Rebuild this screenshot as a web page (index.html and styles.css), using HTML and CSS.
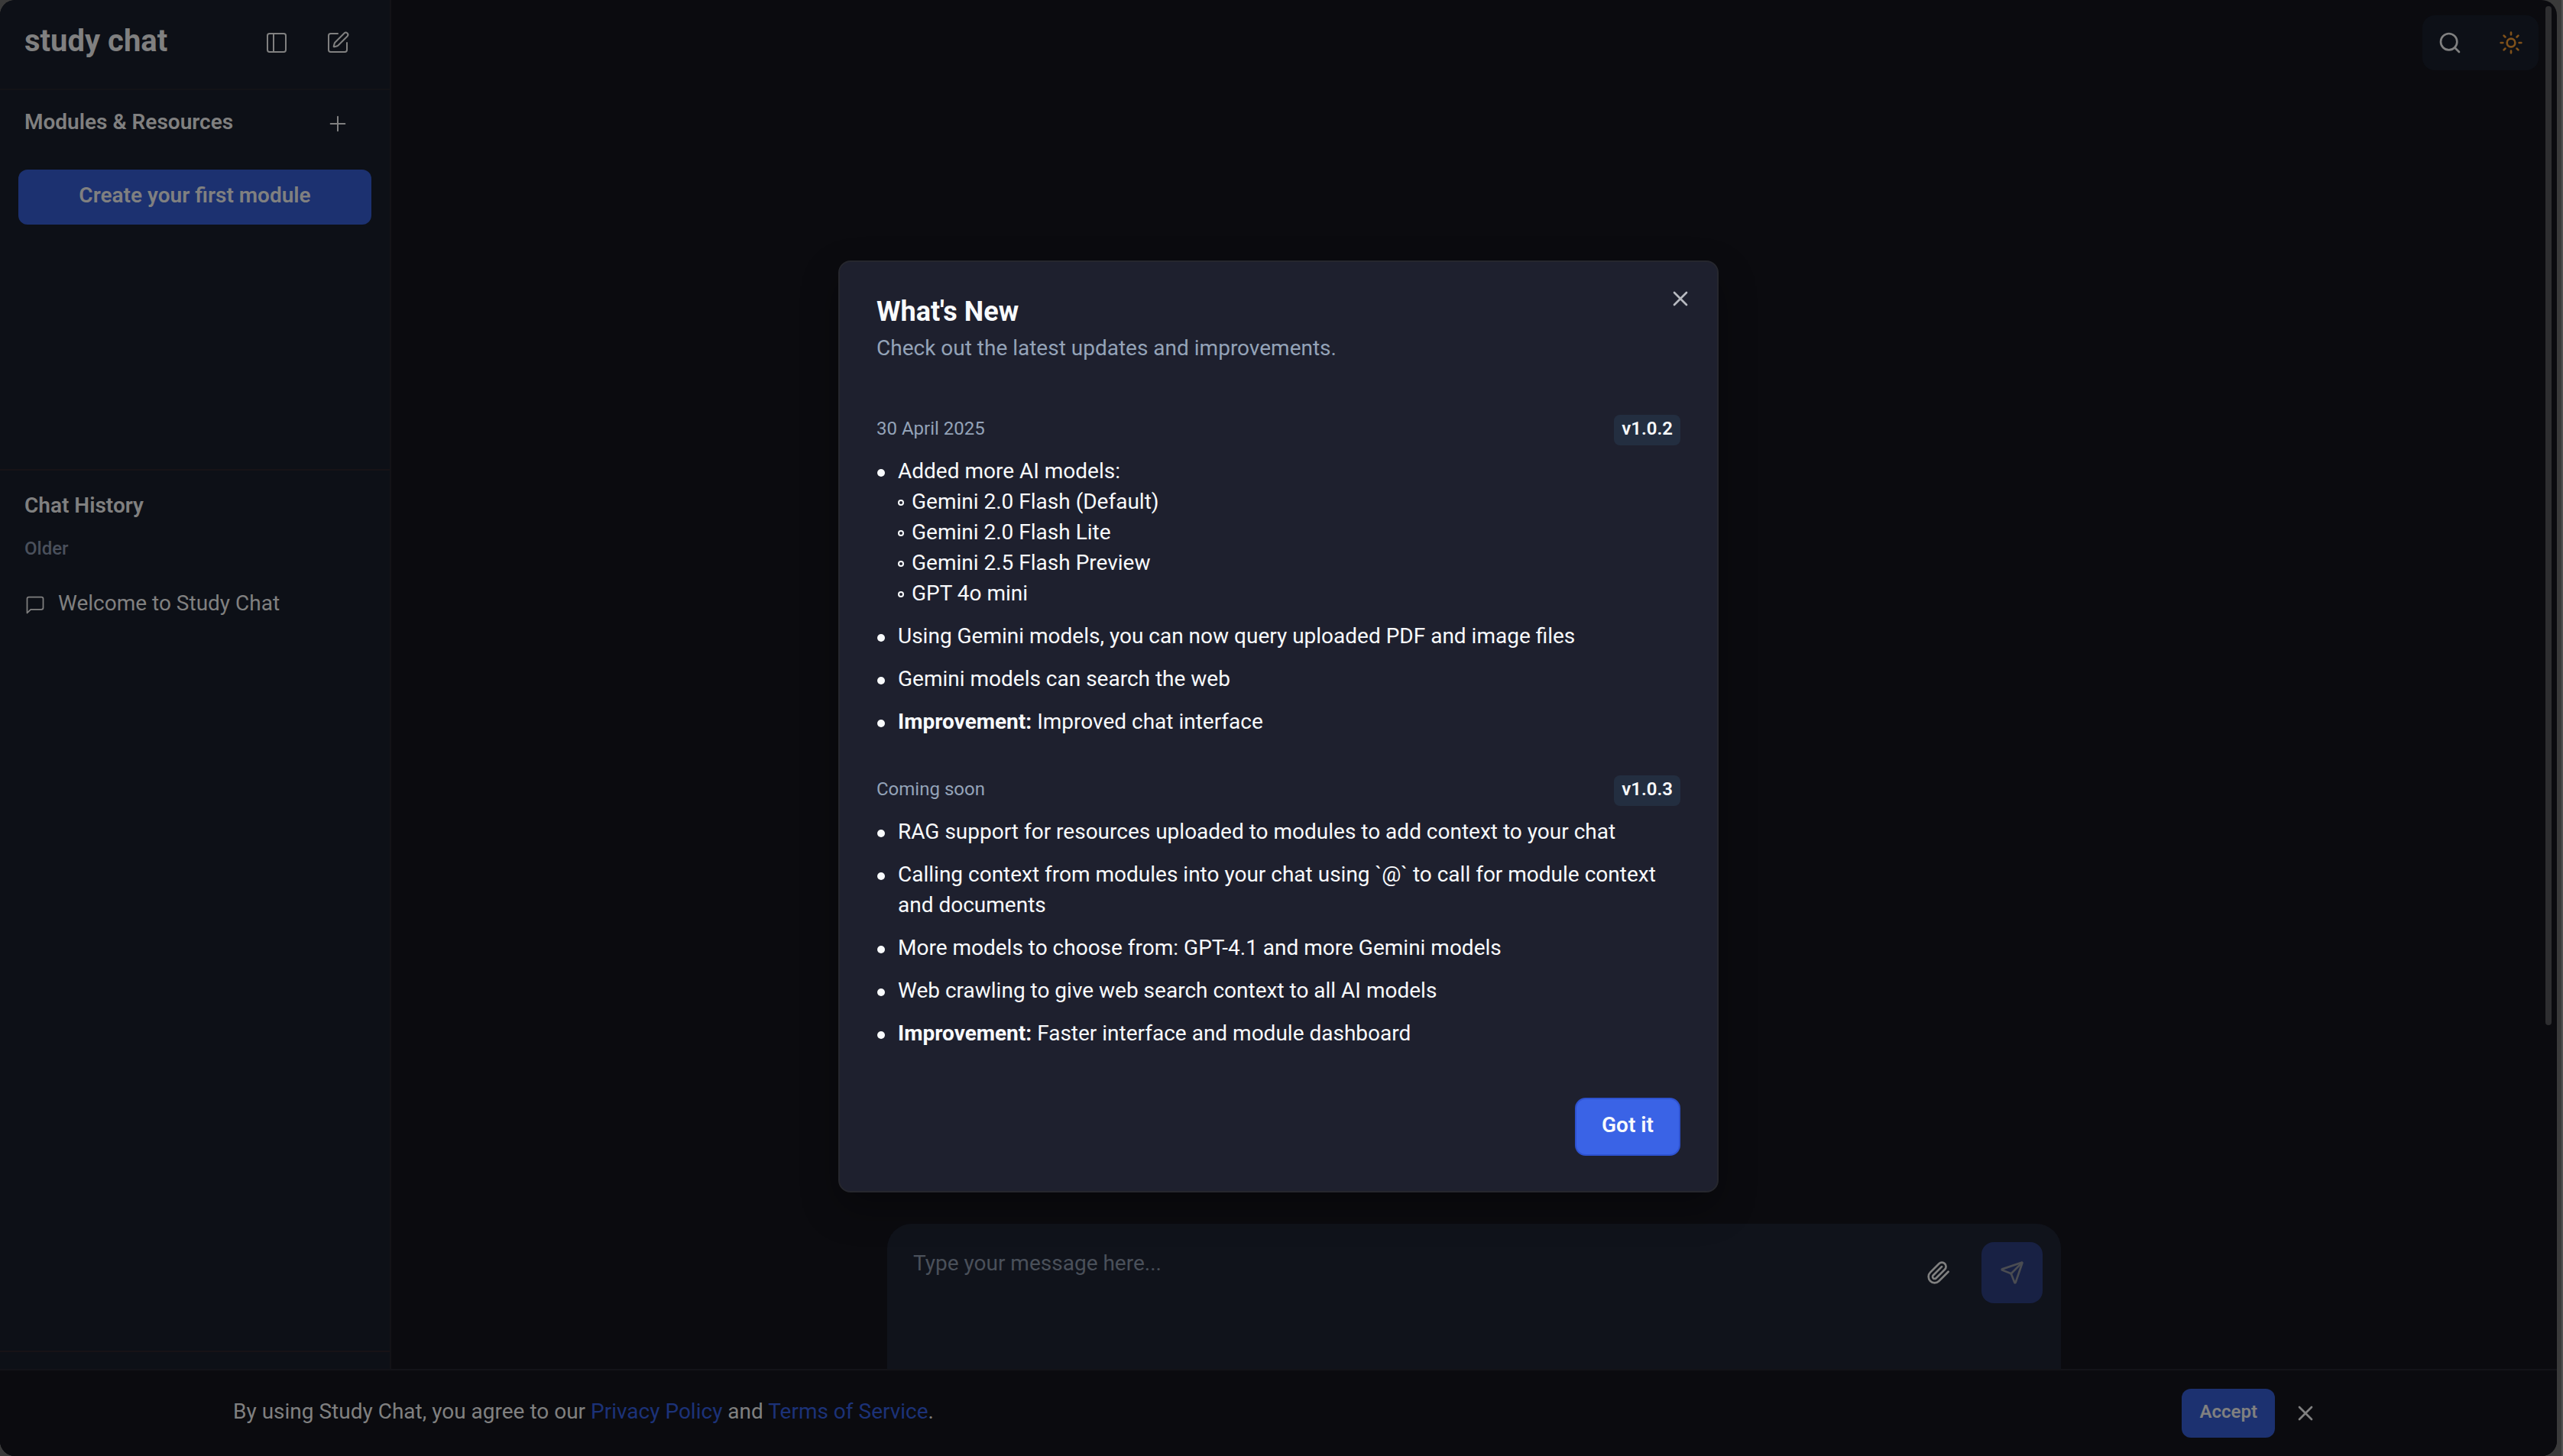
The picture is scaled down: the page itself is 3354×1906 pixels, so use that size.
FILE: index.html
```html
<!DOCTYPE html>
<html lang="en">
<head>
<meta charset="utf-8">
<meta name="viewport" content="width=device-width, initial-scale=1">
<title>study chat</title>
<link rel="stylesheet" href="styles.css">
</head>
<body>
<div class="window">
  <div class="shell">
    <aside class="sidebar">
      <header class="sidebar-header">
        <h1 class="brand">study chat</h1>
        <button class="icon-btn" type="button" aria-label="Toggle sidebar">
          <svg class="icon" viewBox="0 0 24 24"><rect x="3" y="3" width="18" height="18" rx="2"/><path d="M9 3v18"/></svg>
        </button>
        <button class="icon-btn" type="button" aria-label="New chat">
          <svg class="icon" viewBox="0 0 24 24"><path d="M12 3H5a2 2 0 0 0-2 2v14a2 2 0 0 0 2 2h14a2 2 0 0 0 2-2v-7"/><path d="M18.375 2.625a1 1 0 0 1 3 3l-9.013 9.014a2 2 0 0 1-.853.505l-2.873.84a.5.5 0 0 1-.62-.62l.84-2.873a2 2 0 0 1 .506-.852z"/></svg>
        </button>
      </header>
      <section class="modules">
        <div class="modules-head">
          <h2 class="section-title">Modules &amp; Resources</h2>
          <button class="icon-btn" type="button" aria-label="Add module">
            <svg class="icon" viewBox="0 0 24 24"><path d="M5 12h14M12 5v14"/></svg>
          </button>
        </div>
        <button class="create-btn" type="button">Create your first module</button>
      </section>
      <section class="history">
        <h2 class="section-title">Chat History</h2>
        <h3 class="history-group">Older</h3>
        <a class="history-item" href="#welcome">
          <svg class="icon icon-small" viewBox="0 0 24 24"><path d="M21 15a2 2 0 0 1-2 2H7l-4 4V5a2 2 0 0 1 2-2h14a2 2 0 0 1 2 2z"/></svg>
          <span class="label">Welcome to Study Chat</span>
        </a>
      </section>
      <footer class="sidebar-footer"></footer>
    </aside>

    <main class="main">
      <div class="toolbar">
        <button class="tool-btn" type="button" aria-label="Search">
          <svg class="icon" viewBox="0 0 24 24"><circle cx="11" cy="11" r="8"/><path d="m21 21-4.3-4.3"/></svg>
        </button>
        <button class="tool-btn tool-sun" type="button" aria-label="Toggle theme">
          <svg class="icon" viewBox="0 0 24 24"><circle cx="12" cy="12" r="4"/><path d="M12 2v2M12 20v2M4.93 4.93l1.41 1.41M17.66 17.66l1.41 1.41M2 12h2M20 12h2M6.34 17.66l-1.41 1.41M19.07 4.93l-1.41 1.41"/></svg>
        </button>
      </div>
      <form class="composer">
        <textarea class="composer-input" aria-label="Message" placeholder="Type your message here..."></textarea>
        <button class="composer-btn" type="button" aria-label="Attach file">
          <svg class="icon" viewBox="0 0 24 24"><path d="m21.44 11.05-9.19 9.19a6 6 0 0 1-8.49-8.49l8.57-8.57A4 4 0 1 1 18 8.84l-8.59 8.57a2 2 0 0 1-2.83-2.83l8.49-8.48"/></svg>
        </button>
        <button class="composer-btn composer-send" type="button" aria-label="Send">
          <svg class="icon" viewBox="0 0 24 24"><path d="M14.536 21.686a.5.5 0 0 0 .937-.024l6.5-19a.496.496 0 0 0-.635-.635l-19 6.5a.5.5 0 0 0-.024.937l7.93 3.18a2 2 0 0 1 1.112 1.11z"/><path d="m21.854 2.147-10.94 10.939"/></svg>
        </button>
      </form>
    </main>
  </div>

  <div class="scrollbar"></div>

  <div class="consent">
    <div class="consent-inner">
      <p class="consent-text label">By using Study Chat, you agree to our <a href="#privacy">Privacy Policy</a> and <a href="#terms">Terms of Service</a>.</p>
      <button class="accept-btn" type="button">Accept</button>
      <button class="icon-btn consent-close" type="button" aria-label="Dismiss">
        <svg class="icon" viewBox="0 0 24 24"><path d="M18 6 6 18M6 6l12 12"/></svg>
      </button>
    </div>
  </div>

  <div class="overlay">
    <div class="modal" role="dialog" aria-labelledby="news-title">
      <button class="modal-close" type="button" aria-label="Close">
        <svg class="icon" viewBox="0 0 24 24"><path d="M18 6 6 18M6 6l12 12"/></svg>
      </button>
      <h2 class="modal-title" id="news-title">What's New</h2>
      <p class="modal-subtitle">Check out the latest updates and improvements.</p>

      <div class="releases">
        <section class="release">
          <div class="release-head">
            <span class="release-date label">30 April 2025</span>
            <span class="badge">v1.0.2</span>
          </div>
          <ul class="changes">
            <li><div>Added more AI models:
              <ul class="models">
                <li>Gemini 2.0 Flash (Default)</li>
                <li>Gemini 2.0 Flash Lite</li>
                <li>Gemini 2.5 Flash Preview</li>
                <li>GPT 4o mini</li>
              </ul>
            </div></li>
            <li><div>Using Gemini models, you can now query uploaded PDF and image files</div></li>
            <li><div>Gemini models can search the web</div></li>
            <li><div><strong>Improvement:</strong> Improved chat interface</div></li>
          </ul>
        </section>
        <section class="release">
          <div class="release-head">
            <span class="release-date label">Coming soon</span>
            <span class="badge">v1.0.3</span>
          </div>
          <ul class="changes">
            <li><div>RAG support for resources uploaded to modules to add context to your chat</div></li>
            <li><div>Calling context from modules into your chat using `@` to call for module context and documents</div></li>
            <li><div>More models to choose from: GPT-4.1 and more Gemini models</div></li>
            <li><div>Web crawling to give web search context to all AI models</div></li>
            <li><div><strong>Improvement:</strong> Faster interface and module dashboard</div></li>
          </ul>
        </section>
      </div>
      <div class="modal-actions">
        <button class="confirm-btn" type="button">Got it</button>
      </div>
    </div>
  </div>
</div>
</body>
</html>
```
FILE: styles.css
```css
*, *::before { box-sizing: border-box; margin: 0; padding: 0; }

body {
  height: 100vh;
  padding-right: 6px;
  border-right: 2px solid #505050;
  background: #3a3a3a;
  color: #808080;
  font: 400 28px/40px Roboto, "Liberation Sans", sans-serif;
  overflow: hidden;
}

button, textarea { font: inherit; color: inherit; border: 0; background: none; }
button { cursor: pointer; }
a { color: inherit; text-decoration: none; }
ul { list-style: none; }

.icon {
  display: block;
  width: 32px;
  height: 32px;
  fill: none;
  stroke: currentColor;
  stroke-width: 1.5;
  stroke-linecap: round;
  stroke-linejoin: round;
}
.icon-small { width: 28px; height: 28px; }
.label { padding-bottom: 4px; }

.window {
  position: relative;
  height: 100%;
  border-radius: 20px;
  background: #0b0b0f;
  overflow: hidden;
}
.shell { display: flex; height: 100%; }

/* Sidebar */
.sidebar {
  display: flex;
  flex-direction: column;
  width: 512px;
  flex-shrink: 0;
  background: #0d1017;
  border-right: 2px solid #131317;
}
.sidebar-header {
  display: flex;
  align-items: center;
  gap: 16px;
  height: 118px;
  padding: 0 36px 4px 32px;
  border-bottom: 2px solid #131317;
}
.brand {
  flex: 1;
  padding-bottom: 4px;
  font-size: 40px;
  font-weight: 700;
  line-height: 48px;
}
.icon-btn {
  display: grid;
  place-items: center;
  width: 64px;
  height: 64px;
}
.modules { height: 498px; border-bottom: 2px solid #171317; padding: 0 24px; }
.modules-head {
  display: flex;
  align-items: center;
  justify-content: space-between;
  height: 88px;
  padding: 0 12px 0 8px;
  margin-bottom: 16px;
}
.section-title { padding-bottom: 4px; font-size: 28px; font-weight: 600; }
.create-btn {
  width: 100%;
  height: 72px;
  padding-bottom: 4px;
  border-radius: 12px;
  background: #1c3170;
  font-weight: 600;
}
.history { flex: 1; padding: 26px 32px; }
.history-group {
  margin-top: 16px;
  font-size: 24px;
  font-weight: 500;
  line-height: 32px;
  color: #4a505c;
}
.history-item {
  display: flex;
  align-items: center;
  gap: 16px;
  height: 64px;
  margin-top: 26px;
}
.sidebar-footer { height: 138px; border-top: 2px solid #171317; }

/* Main column */
.main {
  display: flex;
  flex: 1;
  flex-direction: column;
  align-items: center;
  justify-content: space-between;
  min-width: 0;
  padding: 20px 24px 48px;
}
.toolbar {
  display: flex;
  align-self: flex-end;
  gap: 16px;
  padding: 4px;
  border-radius: 16px;
  background: #0d1017;
}
.tool-btn { display: grid; place-items: center; width: 64px; height: 64px; }
.tool-sun { color: #80511a; }
.tool-btn .icon, .composer-btn .icon { stroke-width: 2; }
.composer {
  display: flex;
  align-items: flex-start;
  gap: 16px;
  width: 100%;
  max-width: 1536px;
  height: 256px;
  padding: 24px 24px 24px 34px;
  border-radius: 32px;
  background: #10131b;
}
.composer-input {
  flex: 1;
  height: 100%;
  padding-top: 8px;
  outline: 0;
  resize: none;
}
.composer-input::placeholder { color: #4a505a; }
.composer-btn {
  display: grid;
  place-items: center;
  width: 80px;
  height: 80px;
  border-radius: 16px;
}
.composer-send { background: #182144; color: #4a4c52; }

.scrollbar {
  position: absolute;
  top: 8px;
  right: 7px;
  width: 8px;
  height: 70%;
  border-radius: 4px;
  background: #2e2e30;
}

/* Consent bar pinned to the bottom edge */
.consent {
  position: absolute;
  right: 0;
  bottom: 0;
  left: 0;
  padding: 24px 32px;
  border-top: 2px solid #131318;
  background: #0b0b0f;
}
.consent-inner {
  display: flex;
  align-items: center;
  gap: 16px;
  max-width: 2736px;
  margin: 0 auto;
}
.consent-text { flex: 1; }
.consent-text a { color: #1c3278; }
.accept-btn {
  height: 64px;
  padding: 0 23px 4px;
  border-radius: 12px;
  background: #1c3170;
  font-size: 24px;
  font-weight: 600;
}
.consent-close { width: 48px; }
.consent-close .icon, .modal-close .icon { stroke-width: 2; }

/* Release notes dialog */
.overlay {
  position: absolute;
  inset: 0;
  display: flex;
  align-items: center;
  justify-content: center;
  padding-bottom: 4px;
}
.modal {
  position: relative;
  width: 1152px;
  max-width: 100%;
  padding: 41px 48px 46px;
  border: 2px solid #26272e;
  border-radius: 16px;
  background: #1e202e;
  box-shadow: 0 20px 50px rgba(0, 0, 0, 0.3);
  color: #f8fafc;
}
.modal-close { position: absolute; top: 32px; right: 32px; color: #b7b9c0; }
.modal-title { font-size: 36px; font-weight: 700; line-height: 48px; }
.modal-subtitle { margin-top: 4px; color: #94a3b8; }
.releases { display: grid; gap: 50px; margin-top: 67px; }
.release-head { display: flex; align-items: center; justify-content: space-between; }
.release-date { height: 40px; font-size: 24px; line-height: 36px; color: #94a3b8; }
.badge {
  height: 40px;
  padding: 0 10px;
  border-radius: 8px;
  background: #232e40;
  font-size: 24px;
  font-weight: 600;
  line-height: 36px;
}
.changes { display: grid; gap: 16px; margin-top: 14px; }
.changes > li { display: grid; grid-template-columns: 28px 1fr; }
.changes > li::before {
  content: "";
  width: 10px;
  height: 10px;
  margin: 17px 0 0 1px;
  border-radius: 50%;
  background: currentColor;
}
.models li { display: grid; grid-template-columns: 18px 1fr; }
.models li::before {
  content: "";
  width: 8px;
  height: 8px;
  margin-top: 17px;
  border: 2px solid currentColor;
  border-radius: 50%;
}
.modal-actions { display: flex; justify-content: flex-end; margin-top: 64px; }
.confirm-btn {
  height: 76px;
  padding: 0 33px 4px;
  border: 2px solid #2e52cf;
  border-radius: 14px;
  background: #3a63e6;
  font-weight: 600;
}
```
